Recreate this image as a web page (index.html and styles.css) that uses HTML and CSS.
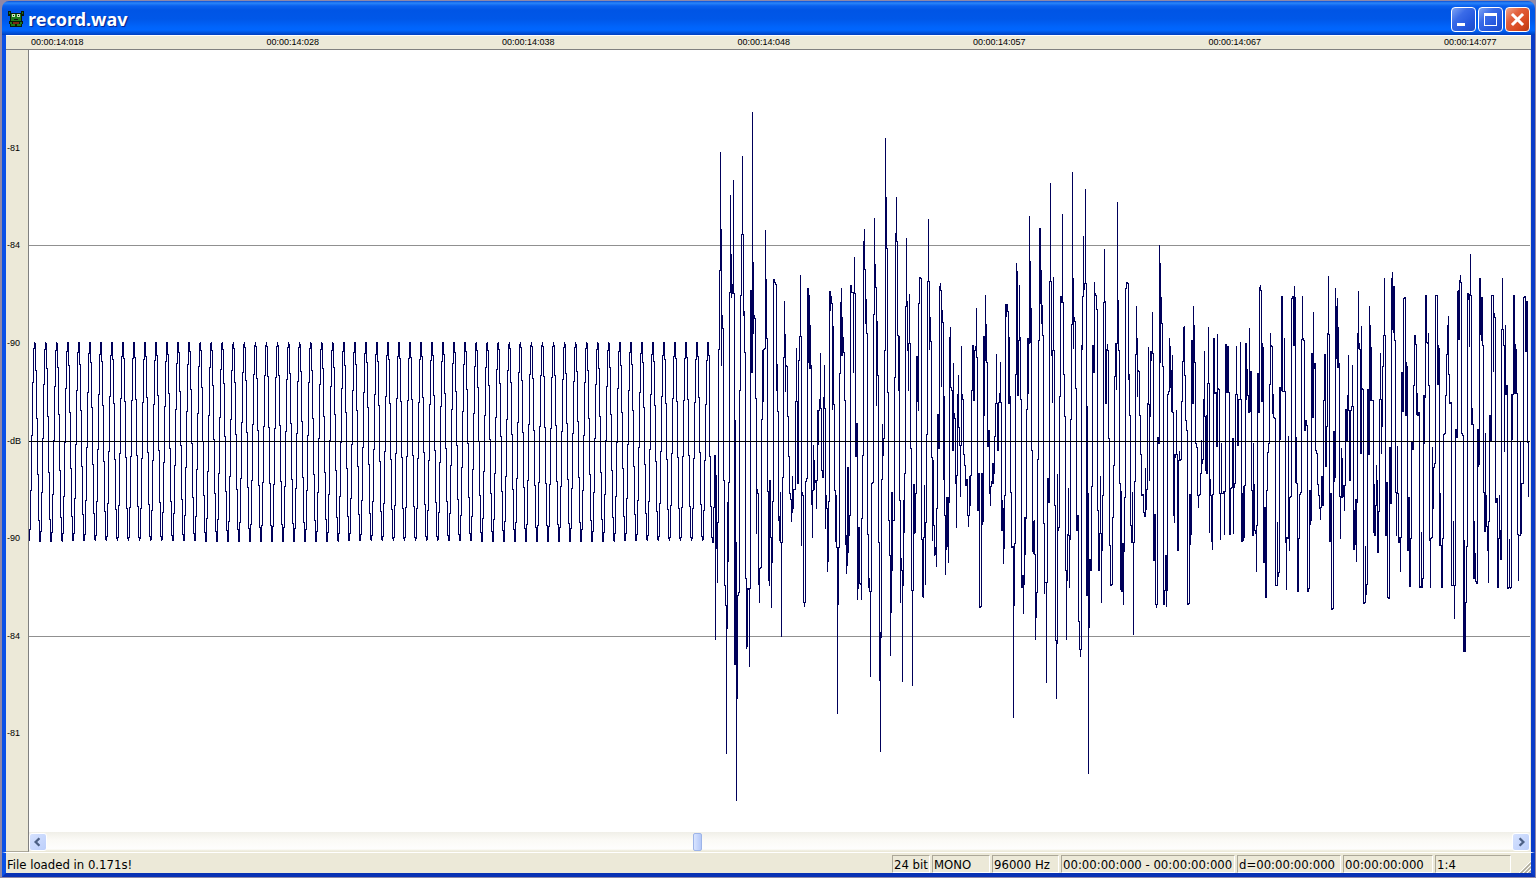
FILE: index.html
```
<!DOCTYPE html>
<html lang="en">
<head>
    <meta charset="UTF-8">
    <meta name="viewport" content="width=device-width, initial-scale=1.0">
    <title>record.wav</title>
    <link rel="stylesheet" href="styles.css">
</head>
<body>
    <div class="window">
        <header class="title-bar">
            <svg class="app-icon" viewBox="0 0 16 16" shape-rendering="crispEdges">
                <path fill="#0c1a08" d="M0 0h3v2h10V0h3v5h-2v5h1v3h-1v3H2v-3H1v-3h1V5H0z"/>
                <path fill="#1d7a1c" d="M1 1h1v2H1zM14 1h1v2h-1zM3 3h10v7H3zM2 11h2v2H2zM12 11h2v2h-2zM3 13h4v2H3zM9 13h4v2H9z"/>
                <path fill="#c9e6b8" d="M4 3h3v3H4zM9 3h3v3H9z"/>
                <path fill="#111" d="M5 4h1v1H5zM10 4h1v1h-1zM6 8h4v1H6z"/>
                <path fill="#7c2a14" d="M5 11h6v2H5z"/>
            </svg>
            <h1>record.wav</h1>
            <div class="window-buttons">
                <button type="button" aria-label="Minimize">
                    <svg viewBox="0 0 21 21"><path fill="#fff" d="M4 14h8v3H4z"/></svg>
                </button>
                <button type="button" aria-label="Maximize">
                    <svg viewBox="0 0 21 21"><path fill="#fff" fill-rule="evenodd" d="M4 4h13v13H4zM5 7v9h11V7z"/></svg>
                </button>
                <button type="button" class="close" aria-label="Close">
                    <svg viewBox="0 0 21 21"><path stroke="#fff" stroke-width="3" stroke-linecap="square" d="M6 6l9 9M15 6l-9 9"/></svg>
                </button>
            </div>
        </header>

        <main class="editor">
            <div class="time-ruler">
                <span>00:00:14:018</span>
                <span>00:00:14:028</span>
                <span>00:00:14:038</span>
                <span>00:00:14:048</span>
                <span>00:00:14:057</span>
                <span>00:00:14:067</span>
                <span>00:00:14:077</span>
            </div>
            <div class="level-ruler">
                <div class="levels">
                    <span>-81</span>
                    <span>-84</span>
                    <span>-90</span>
                    <span>-dB</span>
                    <span>-90</span>
                    <span>-84</span>
                    <span>-81</span>
                </div>
            </div>
            <div class="plot">
                <svg class="wave" viewBox="29 50 1501 782" preserveAspectRatio="none" shape-rendering="crispEdges">
                    <path class="grid-line" d="M29 245.5H1530M29 636.5H1530"/>
                    <path class="trace" id="trace"/>
                    <path class="zero-line" d="M29 441.5H1530"/>
                </svg>
                <div class="scrollbar">
                    <button type="button" aria-label="Scroll left">
                        <svg viewBox="0 0 17 17"><path d="M10 4.5l-4 4 4 4"/></svg>
                    </button>
                    <input type="range" min="0" max="1000" value="444" aria-label="Position">
                    <button type="button" aria-label="Scroll right">
                        <svg viewBox="0 0 17 17"><path d="M7 4.5l4 4-4 4"/></svg>
                    </button>
                </div>
            </div>
        </main>

        <footer class="status-bar">
            <span class="message">File loaded in 0.171s!</span>
            <span class="field bits">24 bit</span>
            <span class="field channels">MONO</span>
            <span class="field rate">96000 Hz</span>
            <span class="field selection">00:00:00:000 - 00:00:00:000</span>
            <span class="field duration">d=00:00:00:000</span>
            <span class="field cursor">00:00:00:000</span>
            <span class="field zoom">1:4</span>
            <svg class="grip" viewBox="0 0 12 12">
                <path stroke="#fff" d="M0 12L12 0M4 12l8-8M8 12l4-4"/>
                <path stroke="#aca899" stroke-width="1.5" d="M1.500 12.500L12.500 1.500M5.500 12.500l7-7M9.500 12.500l3-3"/>
            </svg>
        </footer>
    </div>

    <script src="waveform.js"></script>
</body>
</html>
```
FILE: styles.css
```
/* Window frame */
body {
    margin: 0;
    background-color: #8f88a8;
    font-family: "DejaVu Sans Condensed", "DejaVu Sans", sans-serif;
    color: #000;
}
.window {
    display: flex;
    flex-direction: column;
    box-sizing: border-box;
    height: 100vh;
    padding: 1px 1px 1px 2px;
}
button {
    padding: 0;
    border: none;
}
/* Title bar */
.title-bar {
    display: flex;
    align-items: center;
    flex: 0 0 34px;
    padding: 2px 5px 0 6px;
    box-sizing: border-box;
    border-radius: 7px 7px 0 0;
    background: linear-gradient(#0a4fd8 0, #2a86fa 2px, #0a60ee 5px, #0055e5 9px, #0057e8 18px, #0064fb 26px, #0066ff 29px, #0050d8 32px, #003ec0 34px);
}
.app-icon {
    width: 16px;
    height: 16px;
}
.title-bar h1 {
    flex: 1;
    margin: 0 0 0 4px;
    font-family: "Noto Sans", sans-serif;
    font-size: 18px;
    line-height: 24px;
    font-weight: bold;
    color: #fff;
    text-shadow: 1px 1px 1px #0a1f8c;
}
.window-buttons {
    display: flex;
    gap: 2px;
}
.window-buttons button {
    box-sizing: border-box;
    width: 25px;
    height: 25px;
    border: 1px solid #fff;
    border-radius: 4px;
    background: linear-gradient(135deg, #7fa4f4, #3a6be8 35%, #2457dd 70%, #1c4bc8);
}
.window-buttons .close {
    background: linear-gradient(135deg, #f0a58c, #e2603c 35%, #d84a20 70%, #b83a12);
}
.window-buttons svg {
    display: block;
    width: 21px;
    height: 21px;
    margin: 1px;
}
/* Rulers and plot */
.editor {
    display: grid;
    grid-template: 15px 1fr / 23px 1fr;
    flex: 1;
    min-height: 0;
    background-color: #ece9d8;
}
.editor,
.status-bar {
    border-left: 4px solid #0a50e6;
    border-right: 4px solid #0a3cc8;
}
.time-ruler {
    grid-column: 1 / 3;
    display: flex;
    box-sizing: border-box;
    padding-left: 25px;
    border-top: 1px solid #fff;
    border-bottom: 1px solid #808080;
    font-family: "Liberation Sans", Arial, sans-serif;
    font-size: 9px;
    line-height: 13px;
    overflow: hidden;
}
.time-ruler span {
    flex: 0 0 15.7%;
}
.level-ruler {
    box-sizing: border-box;
    padding-bottom: 20px;
    border-right: 1px solid #808080;
    border-bottom: 1px solid #aca899;
}
.levels {
    display: flex;
    flex-direction: column;
    justify-content: space-evenly;
    height: 100%;
    padding-left: 1px;
    font-family: "Liberation Sans", Arial, sans-serif;
    font-size: 9px;
    line-height: 0;
}
.plot {
    display: flex;
    flex-direction: column;
    min-width: 0;
    min-height: 0;
    margin-right: 1px;
    background-color: #fff;
}
.wave {
    flex: 1;
    width: 100%;
    min-height: 0;
}
.wave path {
    fill: none;
    stroke-width: 1px;
    vector-effect: non-scaling-stroke;
}
.grid-line {
    stroke: #909090;
}
.zero-line {
    stroke: #000;
}
.trace {
    stroke: #00005a;
}
/* Scrollbar */
.scrollbar {
    display: flex;
    flex: 0 0 20px;
    background: linear-gradient(#f0efe8, #fbfaf6 8px, #fefefd 17px, #ece9d8 19px);
}
.scrollbar button {
    box-sizing: border-box;
    width: 18px;
    height: 18px;
    margin-top: 1px;
    border: 1px solid #fff;
    border-radius: 3px;
    background: linear-gradient(135deg, #d6e2fe, #bccffb);
}
.scrollbar svg {
    display: block;
    width: 16px;
    height: 16px;
}
.scrollbar path {
    fill: none;
    stroke: #4d6185;
    stroke-width: 2.5;
}
.scrollbar input {
    flex: 1;
    min-width: 0;
    height: 18px;
    margin: 1px 0 0;
    appearance: none;
    background: none;
}
.scrollbar input::-webkit-slider-thumb {
    appearance: none;
    box-sizing: border-box;
    width: 9px;
    height: 18px;
    border: 1px solid #9db4e8;
    border-radius: 2px;
    background: linear-gradient(90deg, #d8e4ff, #b4c8f8);
}
/* Status bar */
.status-bar {
    display: flex;
    align-items: flex-end;
    flex: 0 0 25px;
    box-sizing: border-box;
    gap: 2px;
    border-top: 1px solid #fff;
    border-bottom: 4px solid #0831b4;
    background-color: #ece9d8;
    font-size: 13px;
    line-height: 17px;
    white-space: nowrap;
}
.message {
    flex: 1;
    padding-left: 1px;
}
.field {
    box-sizing: border-box;
    height: 18px;
    padding-left: 1px;
    border: 1px solid #fff;
    border-top-color: #aca899;
    border-left-color: #aca899;
}
.bits {
    width: 38px;
}
.channels {
    width: 58px;
}
.rate {
    width: 67px;
}
.selection {
    width: 174px;
}
.duration {
    width: 104px;
}
.cursor {
    width: 90px;
}
.zoom {
    width: 76px;
}
.grip {
    width: 12px;
    height: 12px;
    margin-left: 6px;
}
```
FILE: waveform.js
```
// Steady tone before the signal starts
const TONE = { from: 29, to: 708, center: 441.5, amplitude: 100, period: 11.04, peak: 34.5 };

// Signal levels, as column:y,y,... (every y that the trace visits in that column)
const SIGNAL = `
709:456 710:506 711:537 712:542 713:507 714:455 715:640,475 716:548 717:583,522 718:349 719:270
720:152,229 721:366,315 722:328 723:480 724:585 725:605 726:754,628 727:502,561 728:482 729:292
730:195,254 731:298,290 732:284,293 733:180,293 734:295,664 735:420,542 736:801,698 737:595 738:592
739:390 740:295 741:234 742:156,234 743:316,311 744:352 745:578 746:649,588 747:647,588 748:589
749:667,588 750:290 751:372 752:112,262 753:334,315 754:318 755:398 756:534,492 757:489,493 758:584
759:603,568 760:567 761:419 762:350 763:402,349 764:348 765:230,279 766:338 767:491 768:580
769:586,480 770:537 771:608,562 772:501 773:279 774:282 775:284 776:391,364 777:411 778:520
779:541,516 780:492,542 781:637,542 782:477 783:357 784:301,334 785:392,365 786:366 787:416 788:456
789:493 790:499 791:522,512 792:476,508 793:489 795:401 796:348,401 797:483 798:427,360 799:336
800:275,336 801:546,492 802:495 803:602 804:607,602 805:481 806:478 807:288 808:362 809:295,368
810:325,365 811:504 812:538,490 813:445,489 814:460,480 815:482 816:509,480 817:410 818:445,410
819:399 820:353,408 821:470 822:477 823:397 824:365,408 825:529,495 826:508 827:572,561 828:501
829:291 830:311,296 831:303 832:410,326 833:404 834:490 835:542,495 836:547 837:714,604 838:547
839:373 840:302 841:288,355 842:317,337 843:352 844:400 845:545,535 846:574,565 847:467 848:546
848:553,515 849:536,515 850:285 851:292 853:373,292 854:257,293 855:456 856:423 857:600,588 858:527
859:583 860:584 861:600,518 862:462,455 863:241 864:229,269 865:324,299 866:333 867:534 868:588,578
869:591 870:677,591 871:483 872:482 873:314 874:218,264 875:287 876:406,321 877:375 878:542 879:681,632
880:752,637 881:479 882:424,455 883:438 884:350 885:138,197 886:248 887:392 888:520 889:555
890:656,591 891:613,492 892:571,520 893:520 894:377 895:233 896:197,241 897:335 898:391,336 899:500
900:603,558 901:570 902:682,585 903:500 904:533,473 905:306 906:238,301 907:350 908:391,343
909:294,343 910:448 911:590 912:686,590 913:484 914:534,532 915:493 916:356 917:402,394 918:411,303
919:277 920:278 921:539 922:597,539 923:598,537 924:485,536 925:585,522 926:434 927:281 928:219,281
929:350,317 930:341 931:457 932:541,460 933:525 934:556,547 935:554 936:567,508 937:414 938:448
939:286 940:283,290 941:387,310 942:322 943:479 944:396,515 945:575,515 946:550,497 947:547,497
948:563,502 949:337 950:327,387 951:390 952:450 953:363,413 954:418 955:483 956:528,475 957:394
958:375,427 959:445 960:497,445 961:346,394 962:399 963:454 964:465 965:485 966:479 967:515
968:527,515 969:476,505 970:475 971:390 972:345 973:400 974:350 975:346 976:308,357 977:510 978:473
979:607 980:606 981:473 982:525,521 983:336 984:416,360 985:295,324 986:362 987:446 988:430 989:493
990:506,486 991:481 992:463,483 993:463 994:474,436 995:403 996:354,403 997:450 998:402 999:393
1000:362,402 1001:530 1002:500,508 1003:564,548 1004:495 1005:304 1006:317,304 1007:311 1008:403
1009:337,396 1010:492 1011:547 1012:546 1013:718,605 1014:543 1015:374 1016:263,271 1017:395 1018:340
1019:285,337 1020:399 1021:587 1022:575 1023:614,584 1024:517 1025:555,518 1026:409 1027:338
1028:394,343 1029:216,261 1030:343,308 1031:450 1032:551 1033:521,553 1034:520,554 1035:640,617
1036:592 1037:459 1038:340 1039:228 1040:303 1041:270,323 1042:305,335 1043:523 1044:594,582 1045:582
1046:683,582 1047:478 1048:502 1049:281 1050:183,281 1051:355 1052:403,350 1053:277,350 1054:505
1055:640 1056:699,643 1057:474,530 1058:527 1059:396 1060:296 1061:302 1062:214,302 1063:374 1064:416
1065:570 1066:640,580 1067:534 1068:488,535 1069:588,539 1070:419 1071:324 1072:172,278 1073:349,317
1074:321 1075:388 1076:530 1077:515 1078:621 1079:649 1080:657,649 1081:345 1082:350,296 1083:236,289
1084:283 1085:189,283 1086:595 1087:406,493 1088:774,627 1089:559 1090:570 1091:486 1092:345 1093:372
1094:282,293 1095:295 1096:309 1097:510 1098:570 1099:562,533 1100:476,533 1101:603,533 1102:551,495
1103:302 1104:249,301 1105:403 1106:349 1107:344,350 1108:438 1109:545 1110:585 1111:584 1112:517
1113:465 1114:376 1115:343 1116:390,343 1117:202,300 1118:350 1119:483 1120:590,491 1121:591 1122:543
1123:605,551 1124:497 1125:288 1126:282 1127:283 1128:380,374 1129:415 1130:525 1131:542 1132:492,542
1133:635,542 1134:481 1135:354 1136:306,338 1137:397,370 1138:371 1139:415 1140:454 1141:495 1142:494
1143:512 1144:516 1145:468,509 1146:489 1147:403 1148:347,404 1149:481,416 1150:351 1151:361,351
1152:312,353 1153:560 1154:514 1155:604 1156:608,604 1157:437 1158:443 1159:245,263 1160:363,297
1161:323 1162:366 1163:604 1164:590 1165:555 1166:607,590 1167:394 1168:391 1169:338,346 1170:387
1171:412,370 1172:355,412 1173:515 1174:523,454 1175:458,454 1176:410,454 1177:550 1178:527,460
1179:451,460 1180:459 1181:401 1182:361 1183:327 1184:326,375 1185:420 1186:430 1187:604 1188:603
1189:494 1190:545,534 1191:340 1192:403 1193:306,325 1194:362 1195:443 1196:447 1197:495 1198:508,495
1199:494 1200:473 1201:440,463 1202:459 1203:399 1204:351,416 1205:470 1206:415,473 1207:383
1208:327,383 1209:533,479 1210:495 1211:541 1212:550,494 1213:338 1214:393 1215:392 1216:446
1217:334,388 1218:389 1219:493 1220:540,493 1221:443,493 1222:493 1223:491 1224:535,491 1225:344
1226:392 1227:346 1228:392 1229:534 1230:488 1231:487 1232:438 1233:534,487 1234:483 1235:394
1236:346,394 1237:445 1238:399 1239:399 1240:342,399 1241:541 1242:493 1243:541,486 1244:538,485
1245:343 1246:400,369 1247:395 1248:412 1249:328,411 1250:371 1251:490 1252:535 1253:443,490
1254:484,530 1255:533 1256:572,525 1257:373 1258:412 1259:287 1260:285,290 1261:401 1262:343,347
1263:562 1264:507 1265:597 1266:490 1267:452 1268:443 1269:384 1270:333,345 1271:346 1272:413
1273:394,417 1274:418 1275:585 1276:585 1277:522,576 1278:572 1279:387 1280:440,390 1281:296 1282:391
1283:391 1284:338,391 1285:542 1286:590,537 1287:538 1288:436,535 1289:551,497 1290:496 1291:298
1292:296 1293:345 1294:286,297 1295:482 1296:437,483 1297:591 1298:592,538 1299:494 1300:492 1301:339
1302:296,338 1303:340 1304:430 1305:420 1306:425 1307:591 1308:588 1309:490 1310:525,520 1311:353
1312:417 1313:312,368 1314:363 1315:450 1316:453 1317:484 1318:495 1319:508 1320:520,507 1321:476
1322:505 1323:400 1324:354 1325:466 1326:426 1327:333 1328:276,334 1329:541 1330:493 1331:609 1332:608
1333:431 1334:482,477 1335:288,306 1336:358 1337:298,367 1338:327,363 1339:496 1340:539,497
1341:448,497 1342:458,496 1343:485 1344:511,485 1345:409 1346:440 1347:395 1348:355,410 1349:480
1350:410 1351:406 1352:365,406 1353:549 1354:510 1355:545,499 1356:562,502 1357:333 1358:291,348
1359:343,349 1360:453 1361:326,388 1362:389 1363:603 1364:602 1365:546,594 1366:584 1367:389 1368:454
1369:306,400 1370:325,364 1371:347,400 1372:400 1373:532 1374:484,535 1375:505 1376:465,480 1377:552
1378:530,511 1379:399 1380:353,399 1381:454,426 1382:366 1383:335 1384:278,335 1385:535 1386:482
1387:597 1388:598 1389:447 1390:503 1391:278 1392:272,329 1393:286,332 1394:286,340 1395:492
1396:536,493 1397:446,493 1398:542 1399:537 1400:572,537 1401:372 1402:411 1403:298 1404:297 1405:415
1406:362,366 1407:550 1408:497 1409:586 1410:538 1411:441 1412:449 1413:385 1414:335 1415:344 1416:414
1417:393,415 1418:412 1419:587 1420:586 1421:532,587 1422:578 1423:395 1424:444,397 1425:295 1426:342
1427:343 1428:333,385 1429:540 1430:588,538 1431:537 1432:447,508 1433:508,467 1434:463 1435:295
1436:295 1437:384 1438:345,348 1439:545 1440:493,545 1441:587 1442:538 1443:434 1444:433 1445:395
1446:354 1447:325,354 1448:316,374 1449:403 1450:402 1451:585 1452:585 1453:521,585 1454:619,585
1455:429 1456:437 1457:291 1458:340,290 1459:340,280 1460:275,282 1461:433 1462:435 1463:651
1464:540,651 1465:602 1466:546 1467:293 1468:299 1469:347,294 1470:254,295 1471:424 1472:408,424
1473:578 1474:521,553 1475:581 1476:583 1477:429 1478:467,464 1479:278 1480:334 1481:297,340
1482:297,345 1483:492 1484:531 1485:433,495 1486:526 1487:551,526 1488:583,521 1489:415 1490:440
1491:295 1492:295 1493:372,313 1494:317 1495:502 1496:498 1497:587 1498:538 1499:495,530 1500:559
1501:329 1502:278,329 1503:345 1504:452,345 1505:325,394 1506:385 1507:588 1508:587 1509:539,587
1510:589,587 1511:394 1512:440,394 1513:295 1514:295,393 1515:344,393 1516:349,393 1517:534
1518:581,535 1519:535 1520:442,533 1521:483 1522:483 1523:297 1524:296 1525:351 1526:301 1527:442
1528:497`;

// Four samples fall in each column; the trace steps from one column to the next
function tonePath() {
    let d = '';
    for (let x = TONE.from; x <= TONE.to; x++) {
        for (let i = 0; i < 4; i++) {
            const angle = 2 * Math.PI * (x + i / 4 + 0.1 - TONE.peak) / TONE.period;
            const y = Math.round(TONE.center - TONE.amplitude * Math.cos(angle));
            d += d === '' ? `M${x + 0.5} ${y}` : `H${x + 0.5}V${y}`;
        }
    }
    return d;
}

function signalPath() {
    return SIGNAL.trim().split(/\s+/).map((column) => {
        const [x, levels] = column.split(':');
        return `H${Number(x) + 0.5}` + levels.split(',').map((y) => `V${y}`).join('');
    }).join('');
}

document.getElementById('trace').setAttribute('d', tonePath() + signalPath());
```
